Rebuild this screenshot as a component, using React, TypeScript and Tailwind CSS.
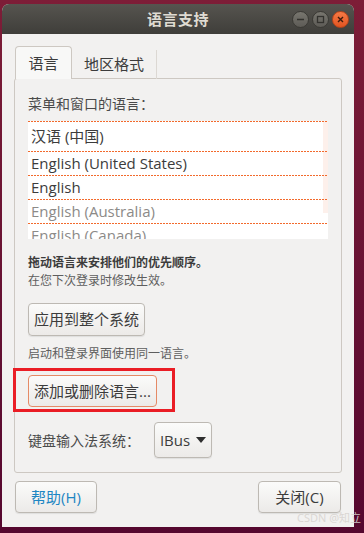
import React from 'react';

const font = { fontFamily: '"Open Sans", "Noto Sans CJK SC", sans-serif' };

const languages = [
  { name: '汉语 (中国)', active: true, tall: true },
  { name: 'English (United States)', active: true, tall: false },
  { name: 'English', active: true, tall: false },
  { name: 'English (Australia)', active: false, tall: false },
  { name: 'English (Canada)', active: false, tall: false },
];

const btn =
  'rounded-[4px] border border-[#bdb9b3] bg-gradient-to-b from-[#fbfbfa] to-[#eceae8] shadow-[0_1px_1px_rgba(0,0,0,0.08)] text-[#3c3c3c]';

const WindowButton: React.FC<{ kind: 'min' | 'max' | 'close' }> = ({ kind }) => (
  <div
    className={`w-[17px] h-[17px] rounded-full flex items-center justify-center border ${
      kind === 'close'
        ? 'bg-gradient-to-b from-[#f77a45] to-[#e05420] border-[#b8441a]'
        : 'bg-gradient-to-b from-[#78766f] to-[#5d5b56] border-[#3a3934]'
    }`}
  >
    <svg width="9" height="9" viewBox="0 0 9 9">
      {kind === 'min' && <line x1="1" y1="4.5" x2="8" y2="4.5" stroke="#33322e" strokeWidth="1.6" />}
      {kind === 'max' && <rect x="1.5" y="1.5" width="6" height="6" fill="none" stroke="#33322e" strokeWidth="1.3" />}
      {kind === 'close' && (
        <path d="M2 2 L7 7 M7 2 L2 7" stroke="#3b1a0c" strokeWidth="1.4" />
      )}
    </svg>
  </div>
);

// dotted orange separator, drawn as a dashed svg line
const Dots: React.FC = () => (
  <svg width="300" height="1" className="block">
    <line x1="0" y1="0.5" x2="300" y2="0.5" stroke="#f26a2c" strokeWidth="1" strokeDasharray="2 1" />
  </svg>
);

export default function App() {
  return (
    <div
      className="relative w-[364px] h-[533px] bg-gradient-to-b from-[#7d1d37] to-[#55072f] pt-[4px] pl-[2px]"
      style={font}
    >
      <div className="w-[352px] h-[523px] flex flex-col bg-[#f2f1f0] rounded-t-[7px] overflow-hidden">
        {/* title bar */}
        <div className="h-[30px] grid grid-cols-[1fr_auto_1fr] items-center bg-gradient-to-b from-[#56544f] to-[#3f3e3a]">
          <div />
          <div className="text-[15px] font-bold text-[#dfdbd2] tracking-[0.5px]">语言支持</div>
          <div className="flex justify-end gap-[3px] pr-[5px]">
            <WindowButton kind="min" />
            <WindowButton kind="max" />
            <WindowButton kind="close" />
          </div>
        </div>

        <div className="flex-1 flex flex-col pl-[12px] pr-[12px] pt-[12px]">
          {/* tabs */}
          <div className="flex items-end h-[33px] pl-[1px] relative z-10">
            <div className="h-[33px] w-[57px] flex items-center justify-center rounded-t-[4px] border border-b-0 border-[#cdc8c2] bg-[#f8f8f7] text-[15px] text-[#3c3c3c]">
              语言
            </div>
            <div className="h-[29px] w-[85px] flex items-center justify-center border-r border-[#dcd8d3] text-[15px] text-[#3c3c3c]">
              地区格式
            </div>
          </div>

          {/* panel */}
          <div className="-mt-[1px] h-[395px] border border-[#cdc8c2] rounded-[3px] bg-[#f2f1f0] px-[13px] pt-[15px] flex flex-col">
            <div className="h-[20px] leading-[20px] text-[14px] text-[#4a4a4a]">菜单和窗口的语言：</div>

            <div className="relative mt-[7px] h-[118px] w-[300px] bg-white overflow-hidden">
              <div className="absolute right-0 top-0 w-[5px] h-[92px] bg-[#fdf0eb]" />
              {languages.map((l) => (
                <div key={l.name} className="relative">
                  <Dots />
                  <div
                    className={`pl-[3px] flex items-center text-[15px] ${l.tall ? 'h-[29px]' : 'h-[23px]'} ${
                      l.active ? 'text-[#3c3c3c]' : 'text-[#8c8a88]'
                    }`}
                  >
                    {l.name}
                  </div>
                </div>
              ))}
            </div>

            <div className="mt-[15px] h-[18px] leading-[18px] text-[12px] font-bold text-[#3c3c3c]">
              拖动语言来安排他们的优先顺序。
            </div>
            <div className="h-[18px] leading-[18px] text-[12px] text-[#5e5e5e]">在您下次登录时修改生效。</div>

            <button className={`${btn} mt-[13px] h-[33px] w-[117px] text-[15px]`}>应用到整个系统</button>

            <div className="mt-[9px] h-[18px] leading-[18px] text-[12px] text-[#5e5e5e]">
              启动和登录界面使用同一语言。
            </div>

            <div className="mt-[5px] -ml-[15px] w-[162px] h-[44px] border-[3px] border-[#ea1d25] pl-[12px] pt-[4px]">
              <button
                className={`h-[32px] w-[129px] text-[15px] rounded-[4px] border border-[#e58a66] bg-gradient-to-b from-[#fbfbfa] to-[#eceae8] text-[#3c3c3c]`}
              >
                添加或删除语言...
              </button>
            </div>

            <div className="mt-[10px] flex items-center h-[36px]">
              <span className="text-[14px] text-[#4a4a4a] w-[126px]">键盘输入法系统：</span>
              <button className={`${btn} h-[36px] w-[58px] flex items-center justify-center gap-[6px] text-[15px]`}>
                IBus
                <svg width="10" height="7" viewBox="0 0 10 7">
                  <path d="M0 0 L10 0 L5 6 Z" fill="#2f2f2f" />
                </svg>
              </button>
            </div>
          </div>

          {/* bottom buttons */}
          <div className="mt-[8px] flex justify-between pl-[1px] pr-[1px]">
            <button className={`${btn} h-[32px] w-[82px] text-[15px] !text-[#1d86c3]`}>帮助(H)</button>
            <button className={`${btn} h-[32px] w-[83px] text-[15px]`}>关闭(C)</button>
          </div>
        </div>
      </div>

      <div className="absolute right-[3px] bottom-[7px] text-[11px] text-[#d8d4d0] opacity-90">CSDN @知立</div>
    </div>
  );
}
